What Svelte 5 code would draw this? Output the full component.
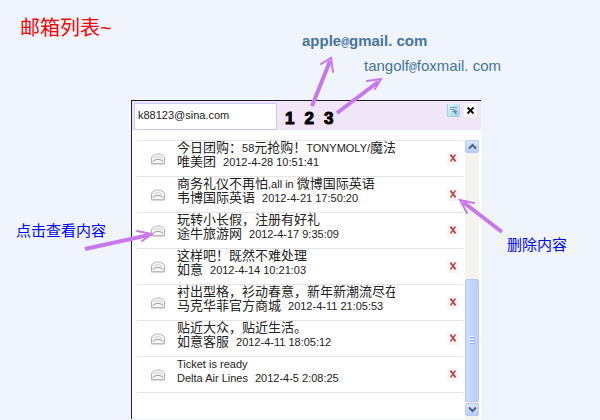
<script lang="ts">
	interface Mail {
		subject: string;
		sender: string;
		date: string;
	}

	let account = $state('k88123@sina.com');
	const accounts = [1, 2, 3];

	let mails = $state<Mail[]>([
		{ subject: '今日团购：58元抢购！TONYMOLY/魔法', sender: '唯美团', date: '2012-4-28 10:51:41' },
		{ subject: '商务礼仪不再怕,all in 微博国际英语', sender: '韦博国际英语', date: '2012-4-21 17:50:20' },
		{ subject: '玩转小长假，注册有好礼', sender: '途牛旅游网', date: '2012-4-17 9:35:09' },
		{ subject: '这样吧！既然不难处理', sender: '如意', date: '2012-4-14 10:21:03' },
		{ subject: '衬出型格，衫动春意，新年新潮流尽在', sender: '马克华菲官方商城', date: '2012-4-11 21:05:53' },
		{ subject: '贴近大众，贴近生活。', sender: '如意客服', date: '2012-4-11 18:05:12' },
		{ subject: 'Ticket is ready', sender: 'Delta Air Lines', date: '2012-4-5 2:08:25' }
	]);

	// Latin runs are set smaller than the Chinese ones
	const split = (text: string) => text.match(/[\x20-\x7e]+|[^\x20-\x7e]+/g) ?? [];
	const isLatin = (run: string) => /^[\x20-\x7e]/.test(run);

	const remove = (mail: Mail) => {
		mails = mails.filter((m) => m !== mail);
	};
</script>

{#snippet mixed(text: string)}
	{#each split(text) as run}<span class:latin={isLatin(run)}>{run}</span>{/each}
{/snippet}

<main class="page">
	<header class="top">
		<h1>邮箱列表~</h1>
		<span class="address first">apple<span class="at">@</span>gmail.&nbsp;com</span>
		<span class="address second">tangolf<span class="at">@</span>foxmail.&nbsp;com</span>
	</header>

	<p class="note note-open">点击查看内容</p>

	<section class="panel">
		<div class="toolbar">
			<input type="text" aria-label="邮箱" bind:value={account} />
			<nav class="accounts">
				{#each accounts as n}
					<button type="button">{n}</button>
				{/each}
			</nav>
			<button class="tool" type="button" aria-label="设置">
				<svg width="13" height="13" viewBox="0 0 13 13">
					<defs>
						<linearGradient id="tool-bg" x1="0" y1="0" x2="1" y2="1">
							<stop offset="0" stop-color="#e3f6fc" />
							<stop offset="1" stop-color="#9bd1ea" />
						</linearGradient>
					</defs>
					<rect width="13" height="13" fill="url(#tool-bg)" />
					<path d="M.5 0V12.5H13" fill="none" stroke="#a4d0e4" />
					<path d="M3 3.5H10M3 5.5H7M5 7.5H7" stroke="#7c9cb0" />
					<path d="M7 5L11 8L9 8.5L10 10.5L8.5 10L7 9Z" fill="#6c90a6" />
				</svg>
			</button>
			<button class="tool close" type="button" aria-label="关闭">
				<svg width="13" height="13" viewBox="0 0 13 13">
					<path d="M3.5 3.5L9.5 9.5M9.5 3.5L3.5 9.5" stroke="#111" stroke-width="2" />
				</svg>
			</button>
		</div>

		<div class="body">
			<ul class="mails">
				{#each mails as mail}
					<li>
						<button class="open" type="button" aria-label="查看内容">
							<svg width="14" height="12" viewBox="0 0 14 12">
								<path d="M.5 4L4.5 1H9.5L13.5 4V11H.5Z" fill="#f4f4f4" stroke="#b4b4b4" />
								<path d="M1 10.5H13" stroke="#bbb" />
								<path d="M3 5L5 4H9L11 5" fill="none" stroke="#d2d2d2" />
								<path d="M1.5 8.5L5 6.5H9L12.5 8.5" fill="none" stroke="#a4a4a4" />
							</svg>
						</button>
						<div class="text">
							<div class="line">{@render mixed(mail.subject)}</div>
							<div class="line">
								{@render mixed(mail.sender)}<time class="latin">{mail.date}</time>
							</div>
						</div>
						<button class="delete" type="button" aria-label="删除内容" onclick={() => remove(mail)}>
							<svg width="12" height="14" viewBox="0 0 12 14">
								<rect width="12" height="13" fill="#faf6f4" />
								<path d="M3.5 2.5L8.5 9.5" stroke="#b8484c" stroke-width="2" />
								<path d="M8.5 2.5L3.5 9.5" stroke="#b8484c" stroke-width="1.4" />
							</svg>
						</button>
					</li>
				{/each}
			</ul>

			<div class="scrollbar">
				<button class="arrow" type="button" aria-label="向上">
					<svg width="9" height="7" viewBox="0 0 9 7">
						<path d="M1 5.5L4.5 2L8 5.5" fill="none" stroke="#4d6185" stroke-width="2" />
					</svg>
				</button>
				<div class="track"></div>
				<div class="thumb">
					<svg width="6" height="8" viewBox="0 0 6 8">
						<path d="M0 .5H5M0 3.5H5M0 6.5H5" stroke="#eef4fe" />
						<path d="M1 1.5H6M1 4.5H6M1 7.5H6" stroke="#8cb0f8" />
					</svg>
				</div>
				<button class="arrow" type="button" aria-label="向下">
					<svg width="9" height="7" viewBox="0 0 9 7">
						<path d="M1 1.5L4.5 5L8 1.5" fill="none" stroke="#4d6185" stroke-width="2" />
					</svg>
				</button>
			</div>
		</div>
	</section>

	<p class="note note-delete">删除内容</p>

	<svg class="arrows" width="600" height="420" viewBox="0 0 600 420" aria-hidden="true">
		<path class="shaft" d="M312 106L330 61M337 113L378 82M85 249L149 235M502 232L463 202" />
		<path class="head" d="M321 64L331 58L333 72M367 81L381 79L375 89M137 231L152 234L142 241M474 203L460 200L467 213" />
	</svg>
</main>

<style>
	:global(body) {
		margin: 0;
		background: #eff4fd;
	}

	.page {
		position: relative;
		display: grid;
		grid-template-columns: 131px 1fr 119px;
		grid-template-rows: 100px auto;
		font-family: 'Liberation Sans', 'Noto Sans CJK SC', sans-serif;
		color: #222;
	}

	button {
		display: flex;
		align-items: center;
		justify-content: center;
		padding: 0;
		border: none;
		background: none;
		cursor: pointer;
	}

	svg {
		display: block;
	}

	.top {
		grid-column: 1 / -1;
	}

	h1 {
		margin: 16px 0 0 20px;
		font-size: 20px;
		line-height: 24px;
		font-weight: 400;
		color: #ff0000;
	}

	.address {
		position: absolute;
		font-size: 15px;
		line-height: 18px;
		color: #48759a;
	}

	.address .at {
		font-family: 'Liberation Mono', monospace;
		font-size: 13px;
	}

	.first {
		left: 302px;
		top: 32px;
		font-weight: 700;
	}

	.second {
		left: 364px;
		top: 57px;
	}

	.note {
		margin: 0;
		font-size: 15px;
		line-height: 20px;
		color: #0000ff;
		white-space: nowrap;
	}

	.note-open {
		padding: 121px 0 0 16px;
	}

	.note-delete {
		padding: 135px 0 0 26px;
	}

	.panel {
		min-width: 0;
		border-top: 1px solid #1c1820;
		border-left: 1px solid #1c2430;
		background: #fff;
	}

	.toolbar {
		display: flex;
		align-items: flex-start;
		gap: 4px;
		height: 29px;
		padding-right: 4px;
		background: #f0e6f7;
	}

	.toolbar input {
		box-sizing: border-box;
		width: 143px;
		height: 27px;
		margin: 2px 0 0 2px;
		padding: 0 3px 4px;
		border: 1px solid #c9c9fa;
		background: #fff;
		font-family: inherit;
		font-size: 11px;
		color: #222;
	}

	.accounts {
		display: flex;
		flex: 1;
		gap: 10px;
		padding: 9px 0 0 4px;
	}

	.accounts button {
		font-family: inherit;
		font-size: 17px;
		line-height: 18px;
		font-weight: 700;
		color: #000;
		-webkit-text-stroke: 1px #000;
	}

	.tool {
		margin-top: 3px;
	}

	.close {
		background: #fff;
	}

	.body {
		display: flex;
		gap: 2px;
		padding: 10px 2px 0 5px;
	}

	.mails {
		flex: 1;
		min-width: 0;
		margin: 0;
		padding: 0 0 26px;
		list-style: none;
	}

	li {
		display: flex;
		height: 35px;
		border-top: 1px solid #e4e4e4;
	}

	li:last-child {
		border-bottom: 1px solid #e4e4e4;
	}

	.open {
		width: 40px;
		padding-left: 2px;
	}

	.text {
		flex: 1;
		min-width: 0;
		margin-right: 52px;
	}

	.line {
		height: 14px;
		overflow: hidden;
		font-size: 13px;
		line-height: 14px;
		white-space: nowrap;
	}

	.latin {
		font-size: 11px;
	}

	time {
		margin-left: 7px;
	}

	.delete {
		width: 12px;
		margin-right: 4px;
	}

	.scrollbar {
		display: flex;
		flex-direction: column;
		gap: 1px;
		width: 14px;
		padding-bottom: 3px;
		background: #f5f3f0;
	}

	.arrow {
		height: 13px;
		border: 1px solid #b8cbf8;
		border-radius: 2px;
		background: linear-gradient(#dbe6fe, #b5cbfa);
	}

	.track {
		flex: 1;
	}

	.thumb {
		display: flex;
		align-items: center;
		justify-content: center;
		flex: 0 0 44%;
		border: 1px solid #b0c8fa;
		border-radius: 2px;
		background: linear-gradient(90deg, #cddcfe, #b9cffc);
	}

	.arrows {
		position: absolute;
		left: 0;
		top: 0;
		pointer-events: none;
	}

	.shaft {
		fill: none;
		stroke: #c779ec;
		stroke-width: 4;
	}

	.head {
		fill: none;
		stroke: #c779ec;
		stroke-width: 2;
		stroke-linecap: round;
		stroke-linejoin: miter;
	}
</style>
